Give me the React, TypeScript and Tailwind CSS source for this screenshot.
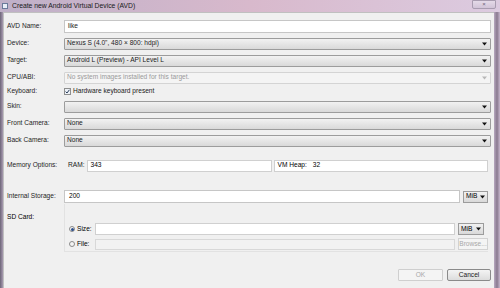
import React from "react"

const font = { fontFamily: '"Liberation Sans", Arial, sans-serif' }

function Arrow({ dim = false }: { dim?: boolean }) {
  return (
    <svg width="5" height="4" viewBox="0 0 5 4" className="shrink-0">
      <path d="M0 0.5 L5 0.5 L2.5 3.5 Z" fill={dim ? "#b8b8b8" : "#111"} />
    </svg>
  )
}

function Combo({ value = "", disabled = false }: { value?: string; disabled?: boolean }) {
  return (
    <div
      className={
        disabled
          ? "flex-1 h-[12px] flex items-center justify-between pl-[2px] pr-[3px] border border-[#d4d4d4] bg-[#f4f4f4] text-[#9a9a9a] rounded-[1px]"
          : "flex-1 h-[12px] flex items-center justify-between pl-[2px] pr-[3px] border border-[#9c9c9c] bg-gradient-to-b from-[#f2f2f2] to-[#d9d9d9] text-[#1a1a1a] rounded-[1px]"
      }
    >
      <span>{value}</span>
      <Arrow dim={disabled} />
    </div>
  )
}

function Row({ label, children, h = "h-[13px]" }: { label: string; children?: React.ReactNode; h?: string }) {
  return (
    <div className={`flex items-center ${h}`}>
      <div className="w-[60px] pl-[3px] text-[#1e1e1e] shrink-0">{label}</div>
      <div className="flex-1 flex items-center pr-[3px]">{children}</div>
    </div>
  )
}

function Radio({ checked }: { checked: boolean }) {
  return (
    <span className="w-[6px] h-[6px] rounded-full border border-[#8a8a8a] bg-[#f4f4f4] flex items-center justify-center shrink-0">
      {checked && <span className="w-[3px] h-[3px] rounded-full bg-[#2c4f8c]" />}
    </span>
  )
}

export default function App() {
  return (
    <div
      className="w-[500px] h-[288px] overflow-hidden bg-gradient-to-r from-[#c8b7cf] via-[#d9c6db] to-[#cdb9d4] text-[6.6px] leading-none"
      style={font}
    >
      {/* title bar */}
      <div className="h-[12px] flex items-center relative bg-gradient-to-r from-[#bfb0c8] via-[#d8b9cc] to-[#dccbe0]">
        <div className="w-[6px] h-[6px] ml-[2px] mr-[4px] bg-[#e8eef8] border border-[#6a7a9a]" />
        <span className="text-[#1a1a1a] text-[6.8px]">Create new Android Virtual Device (AVD)</span>
        <div className="ml-auto mr-[4px] mt-[-4px] w-[24px] h-[9px] rounded-b-[2px] border border-[#a89cb0] bg-gradient-to-b from-[#e4dae8] to-[#d2c4d8] flex items-center justify-center">
          <span className="text-[6px] text-[#6f6478]">×</span>
        </div>
      </div>

      <div className="flex h-[276px]">
        <div className="w-[3px] bg-gradient-to-r from-[#6d6578] to-[#a99cb2]" />
        <div className="flex-1 bg-[#f0f0f0] border-t border-l border-[#c0c0c0] flex flex-col pt-[7px]">
          <Row label="AVD Name:">
            <div className="flex-1 h-[13px] bg-white border border-[#c6c6c6] flex items-center pl-[3px] text-[#1a1a1a]">like</div>
          </Row>
          <div className="h-[4px]" />
          <Row label="Device:">
            <Combo value={'Nexus S (4.0", 480 × 800: hdpi)'} />
          </Row>
          <div className="h-[4px]" />
          <Row label="Target:">
            <Combo value="Android L (Preview) - API Level L" />
          </Row>
          <div className="h-[4px]" />
          <Row label="CPU/ABI:">
            <Combo value="No system images installed for this target." disabled />
          </Row>
          <div className="h-[2px]" />
          <Row label="Keyboard:" h="h-[11px]">
            <span className="w-[7px] h-[7px] border border-[#8e8f8f] bg-[#eef2f7] flex items-center justify-center mr-[2px]">
              <svg width="5" height="5" viewBox="0 0 5 5">
                <path d="M0.6 2.6 L2 4 L4.4 0.8" stroke="#2a3e5c" strokeWidth="1" fill="none" />
              </svg>
            </span>
            <span className="text-[#1a1a1a]">Hardware keyboard present</span>
          </Row>
          <div className="h-[3px]" />
          <Row label="Skin:">
            <Combo />
          </Row>
          <div className="h-[4px]" />
          <Row label="Front Camera:">
            <Combo value="None" />
          </Row>
          <div className="h-[4px]" />
          <Row label="Back Camera:">
            <Combo value="None" />
          </Row>
          <div className="h-[12px]" />
          <Row label="Memory Options:">
            <span className="ml-[4px] mr-[3px] text-[#1a1a1a]">RAM:</span>
            <div className="w-[185px] h-[12px] bg-white border border-[#d0d0d0] flex items-center pl-[2px]">343</div>
            <div className="flex-1 ml-[2px] mr-[3px] h-[12px] bg-white border border-[#d0d0d0] flex items-center pl-[2px] gap-[6px]">
              <span>VM Heap:</span>
              <span>32</span>
            </div>
          </Row>
          <div className="h-[18px]" />
          <Row label="Internal Storage:">
            <div className="flex-1 h-[13px] bg-white border border-[#c6c6c6] flex items-center pl-[4px]">200</div>
            <div className="ml-[3px] mr-[3px] w-[25px] h-[12px] border border-[#9c9c9c] bg-gradient-to-b from-[#f2f2f2] to-[#d9d9d9] flex items-center justify-between pl-[2px] pr-[2px]">
              <span>MiB</span>
              <Arrow />
            </div>
          </Row>
          <div className="flex mt-[1px]">
            <div className="w-[60px] pl-[3px] pt-[10px] shrink-0">SD Card:</div>
            <div className="flex-1 mr-[6px] border-l border-b border-[#e2e2e2] pt-[19px] pb-[1px] flex flex-col gap-[3px]">
              <div className="flex items-center h-[12px]">
                <div className="w-[30px] pl-[4px] flex items-center gap-[2px]">
                  <Radio checked />
                  <span>Size:</span>
                </div>
                <div className="flex-1 h-[12px] bg-white border border-[#d0d0d0]" />
                <div className="ml-[3px] w-[26px] h-[12px] border border-[#9c9c9c] bg-gradient-to-b from-[#f2f2f2] to-[#d9d9d9] flex items-center justify-between pl-[2px] pr-[2px]">
                  <span>MiB</span>
                  <Arrow />
                </div>
                <div className="w-[4px]" />
              </div>
              <div className="flex items-center h-[12px]">
                <div className="w-[30px] pl-[4px] flex items-center gap-[2px]">
                  <Radio checked={false} />
                  <span>File:</span>
                </div>
                <div className="flex-1 h-[11px] bg-[#f2f2f2] border border-[#d8d8d8]" />
                <div className="ml-[3px] w-[30px] h-[12px] border border-[#d2d2d2] bg-[#f4f4f4] text-[#a8a8a8] flex items-center justify-center">
                  Browse...
                </div>
              </div>
            </div>
          </div>
          <div className="flex justify-end gap-[4px] mt-[17px] mr-[3px]">
            <div className="w-[45px] h-[12px] border border-[#cfcfcf] bg-[#f4f4f4] text-[#a8a8a8] flex items-center justify-center rounded-[1px]">
              OK
            </div>
            <div className="w-[44px] h-[12px] border border-[#8a8a8a] bg-gradient-to-b from-[#f4f4f4] to-[#dcdcdc] text-[#1a1a1a] flex items-center justify-center rounded-[2px]">
              Cancel
            </div>
          </div>
        </div>
        <div className="w-[6px] bg-gradient-to-r from-[#b7a8bf] via-[#8a7a90] to-[#c7b6cc]" />
      </div>
    </div>
  )
}
